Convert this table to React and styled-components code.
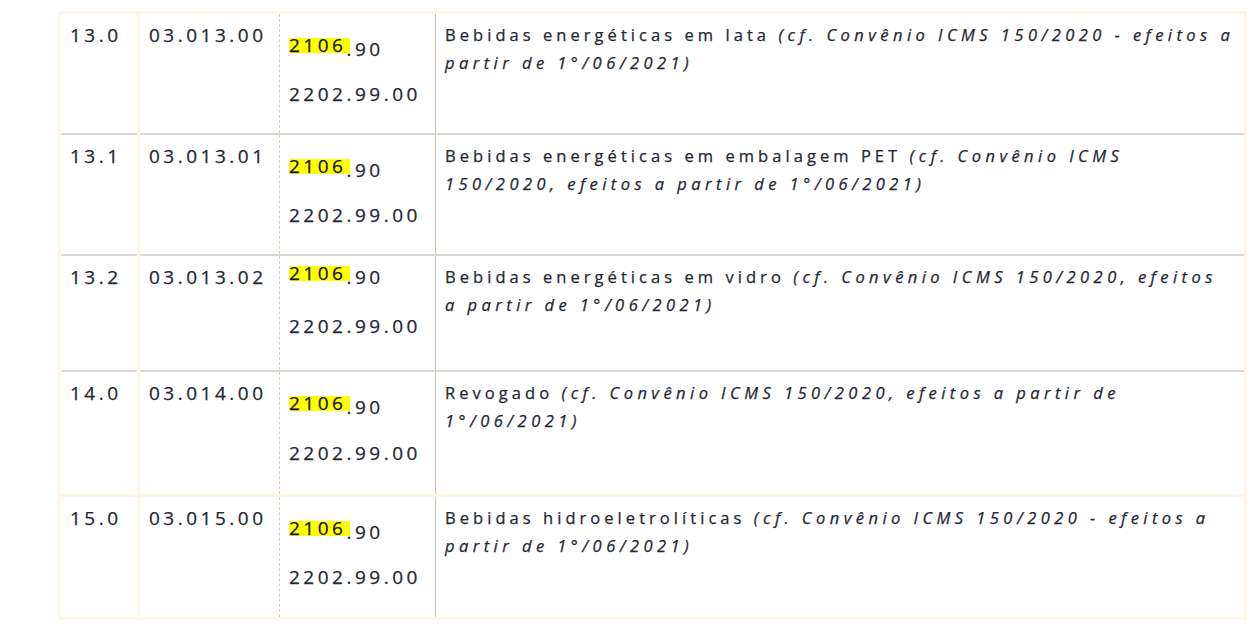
import React from "react";
import styled, { createGlobalStyle } from "styled-components";

const rows = [
  {
    id: "13.0",
    code: "03.013.00",
    height: 121,
    line: "cream",
    lead: 14,
    gap: 17,
    title: "Bebidas energéticas em lata",
    note: ["(cf. Convênio ICMS 150/2020 - efeitos a", "partir de 1°/06/2021)"],
  },
  {
    id: "13.1",
    code: "03.013.01",
    height: 121,
    line: "grey",
    lead: 14,
    gap: 17,
    title: "Bebidas energéticas em embalagem PET",
    note: ["(cf. Convênio ICMS", "150/2020, efeitos a partir de 1°/06/2021)"],
  },
  {
    id: "13.2",
    code: "03.013.02",
    height: 116,
    line: "grey",
    lead: 0,
    gap: 21,
    title: "Bebidas energéticas em vidro",
    note: ["(cf. Convênio ICMS 150/2020, efeitos", "a partir de 1°/06/2021)"],
  },
  {
    id: "14.0",
    code: "03.014.00",
    height: 125,
    line: "grey",
    lead: 14,
    gap: 18,
    title: "Revogado",
    note: ["(cf. Convênio ICMS 150/2020, efeitos a partir de", "1°/06/2021)"],
  },
  {
    id: "15.0",
    code: "03.015.00",
    height: 123,
    line: "cream",
    lead: 14,
    gap: 17,
    title: "Bebidas hidroeletrolíticas",
    note: ["(cf. Convênio ICMS 150/2020 - efeitos a", "partir de 1°/06/2021)"],
  },
];

const App = () => {
  return (
    <>
      <GlobalStyle />
      <Page>
        <Table>
          <colgroup>
            <col style={{ width: 79 }} />
            <col style={{ width: 141 }} />
            <col style={{ width: 156 }} />
            <col style={{ width: 810 }} />
          </colgroup>
          <tbody>
            {rows.map((row) => (
              <Row key={row.id} $height={row.height} $line={row.line}>
                <IdCell>{row.id}</IdCell>
                <CodeCell>{row.code}</CodeCell>
                <NcmCell>
                  <NcmLine $top={row.lead}>
                    <Mark>2106</Mark>.90
                  </NcmLine>
                  <NcmLine $top={row.gap}>2202.99.00</NcmLine>
                </NcmCell>
                <DescCell>
                  {row.title}{" "}
                  <Note>
                    {row.note[0]}
                    <br />
                    {row.note[1]}
                  </Note>
                </DescCell>
              </Row>
            ))}
          </tbody>
        </Table>
      </Page>
    </>
  );
};

export default App;

const GlobalStyle = createGlobalStyle`
  body {
    margin: 0;
    background: #ffffff;
    font-family: "Open Sans", "Liberation Sans", sans-serif;
    color: #1f2732;
  }
`;

const Page = styled.div`
  padding: 11px 0 0 58px;
`;

const Table = styled.table`
  border-collapse: collapse;
  table-layout: fixed;
  width: 1186px;
  border: 3px solid #fdf6e9;
`;

const Row = styled.tr`
  height: ${(props) => props.$height}px;
  border-top: ${(props) =>
    props.$line === "cream" ? "3px solid #fdf6e9" : "2px solid #dbd8d1"};

  &:first-child {
    border-top: 3px solid #fdf6e9;
  }
`;

const Cell = styled.td`
  vertical-align: top;
  padding: 7px 0 0 9px;
  font-size: 19px;
  line-height: 28px;
  letter-spacing: 3.5px;
  white-space: nowrap;
  -webkit-text-stroke: 0.25px #1f2732;
`;

const IdCell = styled(Cell)`
  border-right: 3px solid #fdf6e9;
`;

const CodeCell = styled(Cell)`
  border-right: 1px dashed #d9ccb8;
`;

const NcmCell = styled(Cell)`
  border-right: 1px solid #cbc2b8;
`;

const NcmLine = styled.div`
  margin-top: ${(props) => props.$top}px;
`;

const Mark = styled.span`
  display: inline-block;
  line-height: 15px;
  vertical-align: 4px;
  background: #ffff00;
  color: #111111;
  margin-right: -3.5px;
  padding-right: 3.5px;
`;

const DescCell = styled(Cell)`
  font-size: 16.5px;
  letter-spacing: 4.05px;
  border-right: 3px solid #fdf6e9;
  overflow: hidden;
`;

const Note = styled.em`
  font-style: italic;
  letter-spacing: 4.45px;
`;
